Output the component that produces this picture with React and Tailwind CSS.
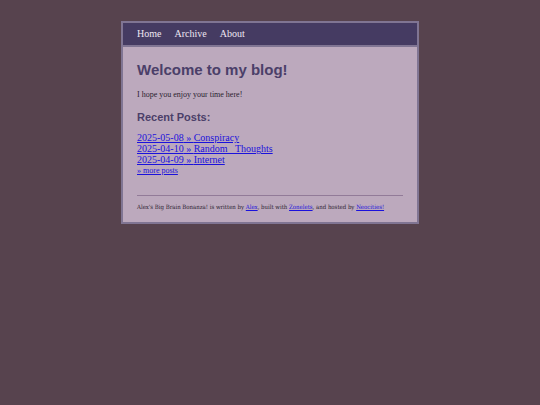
import React from 'react';

const navLinks = ['Home', 'Archive', 'About'];

const posts = [
  { date: '2025-05-08', title: 'Conspiracy' },
  { date: '2025-04-10', title: 'Random_ Thoughts' },
  { date: '2025-04-09', title: 'Internet' },
];

export default function App() {
  return (
    <div className="min-h-screen bg-[#57434e] px-[121px] py-[21px] font-['Liberation_Serif',serif] text-[#2b2230]">
      <div className="border-2 border-[#807593] bg-[#bca9bd]">
        {/* Nav */}
        <header className="border-b-2 border-[#807593] bg-[#453b62] px-3.5 py-1">
          <nav className="flex gap-[13px] text-[10px] leading-[14px] text-[#eee6f2]">
            {navLinks.map((name) => (
              <a key={name} href="#">{name}</a>
            ))}
          </nav>
        </header>

        <main className="px-3.5 pt-3.5">
          <h1 className="font-['Liberation_Sans',sans-serif] text-[15px] leading-[18px] font-bold text-[#4b3f69]">
            Welcome to my blog!
          </h1>
          <p className="mt-2.5 text-[8px] leading-[11px]">I hope you enjoy your time here!</p>
          <h2 className="mt-2.5 font-['Liberation_Sans',sans-serif] text-[11px] leading-[14px] font-bold text-[#4b3f69]">
            Recent Posts:
          </h2>
          <ul className="mt-2 text-[10px] leading-[11px] text-[#1b12dc]">
            {posts.map((post) => (
              <li key={post.date}>
                <a href="#" className="underline">{post.date} » {post.title}</a>
              </li>
            ))}
            <li className="text-[8px]">
              <a href="#" className="underline">» more posts</a>
            </li>
          </ul>
        </main>

        {/* Footer */}
        <footer className="mx-3.5 mt-[19px] border-t border-[#927b98] pt-1.5 pb-2.5 font-['DejaVu_Serif_Condensed','DejaVu_Serif',serif] text-[6px] leading-[10px]">
          Alex's Big Brain Bonanza! is written by <a href="#" className="text-[#1b12dc] underline">Alex</a>, built with{' '}
          <a href="#" className="text-[#1b12dc] underline">Zonelets</a>, and hosted by{' '}
          <a href="#" className="text-[#1b12dc] underline">Neocities!</a>
        </footer>
      </div>
    </div>
  );
}
